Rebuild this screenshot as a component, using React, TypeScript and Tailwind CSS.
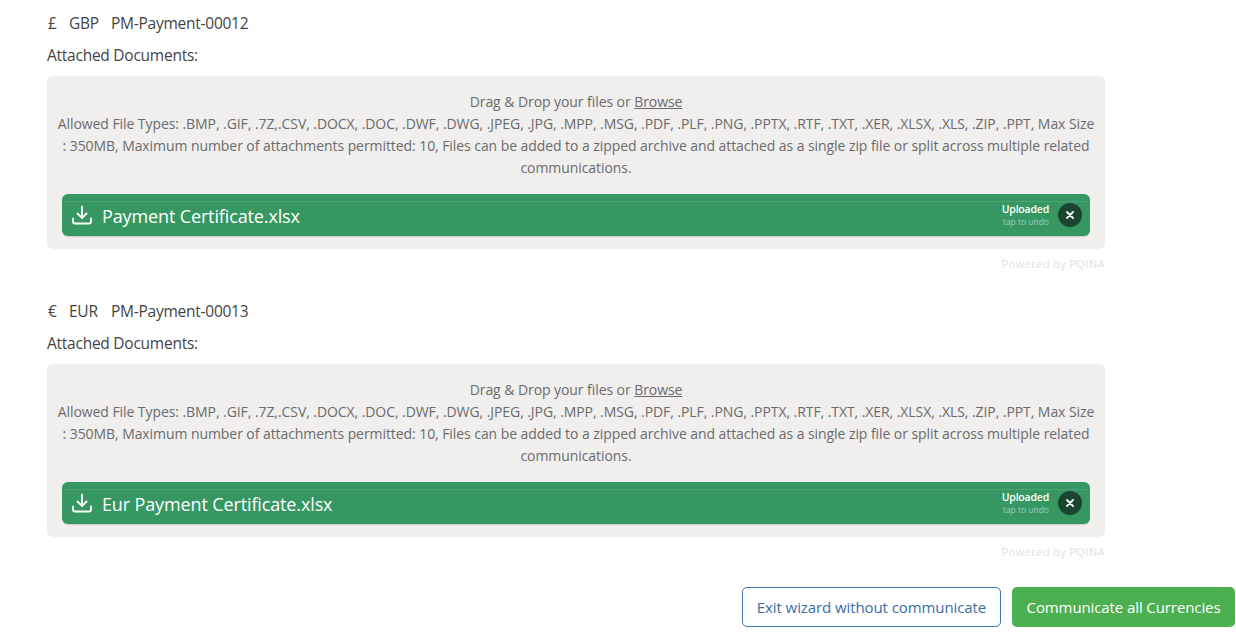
const FONT = "font-['Open_Sans','Noto_Sans',sans-serif]";

function Download() {
  return (
    <svg width="20" height="20" viewBox="0 0 20 20" fill="none" stroke="white" strokeWidth="1.8" strokeLinecap="round" strokeLinejoin="round" className="shrink-0">
      <path d="M10 1.5V12.5M5.5 8.5L10 13L14.500 8.5" />
      <path d="M1 13.500V16.500C1 17.600 1.800 18.500 3 18.500H17C18.200 18.500 19 17.600 19 16.500V13.500" />
    </svg>
  );
}

function Section({ symbol, code, reference, file }: { symbol: string; code: string; reference: string; file: string }) {
  return (
    <section className="w-[1058px]">
      <div className="flex h-[22px] items-center pt-px text-[15.5px] tracking-[-0.25px] text-[#444444]">
        <span className="w-[22px] pl-px">{symbol}</span>
        <span className="w-[42px]">{code}</span>
        <span>{reference}</span>
      </div>
      <div className="mt-[10px] h-[22px] text-[15.5px] leading-[22px] tracking-[-0.25px] text-[#444444]">Attached Documents:</div>
      <div className="mt-[10px] h-[173px] rounded-[6px] bg-[#f0efee] px-[8px] pt-[15px]">
        <div className="text-center text-[14px] leading-[22px] tracking-[-0.07px] text-[#6b6b6b]">
          <div>
            Drag &amp; Drop your files or <span className="underline">Browse</span>
          </div>
          <div>
            Allowed File Types: .BMP, .GIF, .7Z,.CSV, .DOCX, .DOC, .DWF, .DWG, .JPEG, .JPG, .MPP, .MSG, .PDF, .PLF, .PNG, .PPTX, .RTF, .TXT, .XER, .XLSX, .XLS, .ZIP, .PPT, Max Size : 350MB, Maximum number of attachments permitted: 10, Files can be added to a zipped archive and attached as a single zip file or split across multiple related communications.
          </div>
        </div>
        <div className="relative mx-[7px] mt-[15px] flex h-[42px] items-center rounded-[6px] bg-[#369763] pl-[10px] pr-[8px] shadow-[0_1px_1px_rgba(0,0,0,0.15)]">
          <div className="absolute inset-x-0 top-[7px] h-px bg-white/10" />
          <Download />
          <span className="ml-[10px] pt-[2px] text-[18px] tracking-[-0.13px] text-white">{file}</span>
          <div className="ml-auto mr-[9px] flex flex-col items-end">
            <span className="text-[10.500px] font-semibold leading-[13px] tracking-[-0.2px] text-white">Uploaded</span>
            <span className="text-[8.500px] leading-[11px] text-white/50">tap to undo</span>
          </div>
          <button className="flex h-[24px] w-[24px] items-center justify-center rounded-full bg-[#1c4531]">
            <svg width="8" height="8" viewBox="0 0 8 8" stroke="white" strokeWidth="1.800" strokeLinecap="round">
              <path d="M1 1L7 7M7 1L1 7" />
            </svg>
          </button>
        </div>
      </div>
      <div className="mt-[7px] h-[16px] text-right text-[11.500px] leading-[16px] tracking-[0.15px] text-[#e2e2e2]">Powered by PQINA</div>
    </section>
  );
}

export default function App() {
  return (
    <div className={`${FONT} h-[635px] w-[1236px] overflow-hidden bg-white pt-[12px]`}>
      <div className="flex flex-col gap-[28px] pl-[47px]">
        <Section symbol="£" code="GBP" reference="PM-Payment-00012" file="Payment Certificate.xlsx" />
        <Section symbol="€" code="EUR" reference="PM-Payment-00013" file="Eur Payment Certificate.xlsx" />
      </div>
      <div className="mt-[27px] flex justify-end gap-[11px] pr-[1px]">
        <button className="h-[40px] w-[259px] rounded-[5px] border border-[#3a77ae] bg-white text-[15px] tracking-[-0.09px] text-[#3a6ea5]">
          Exit wizard without communicate
        </button>
        <button className="h-[40px] w-[223px] rounded-[5px] bg-[#4caf50] text-[15px] tracking-[-0.1px] text-white">
          Communicate all Currencies
        </button>
      </div>
    </div>
  );
}
